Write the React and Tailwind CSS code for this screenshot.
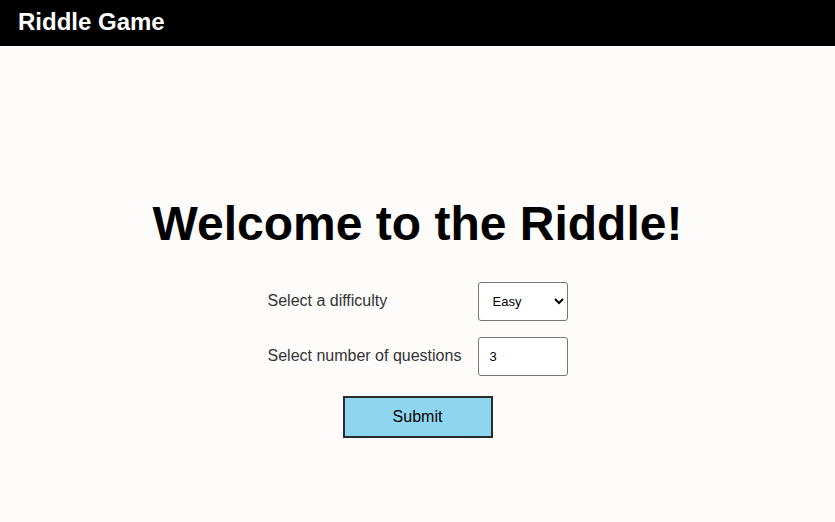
import { useState } from 'react';

export default function App() {
  const [difficulty, setDifficulty] = useState('easy');
  const [count, setCount] = useState(3);

  return (
    <div className="min-h-[522px] bg-[#fdfcfb] font-['Liberation_Sans',Arial,sans-serif]">
      {/* Top bar */}
      <header className="h-[46px] bg-black flex items-center px-[18px]">
        <h2 className="text-white text-[24px] font-bold leading-none -mt-[2px]">Riddle Game</h2>
      </header>

      <main className="flex flex-col items-center pt-[150px]">
        <h1 className="text-[48px] font-bold text-black leading-[55px]">Welcome to the Riddle!</h1>

        <form className="mt-[31px] flex flex-col items-center" onSubmit={e => e.preventDefault()}>
          <div className="grid grid-cols-[210px_90px] gap-y-[16px] items-center text-[16px] text-[#333]">
            <label htmlFor="difficulty" className="-mt-[2px]">Select a difficulty</label>
            <select
              id="difficulty"
              value={difficulty}
              onChange={e => setDifficulty(e.target.value)}
              className="w-[90px] h-[39px] border border-[#767676] rounded-[3px] bg-white pl-[10px] pr-[4px] text-[13px] text-black"
            >
              <option value="easy">Easy</option>
              <option value="medium">Medium</option>
              <option value="hard">Hard</option>
            </select>

            <label htmlFor="count" className="-mt-[2px]">Select number of questions</label>
            <input
              id="count"
              type="number"
              value={count}
              onChange={e => setCount(e.target.value)}
              className="w-[90px] h-[39px] border border-[#767676] rounded-[3px] bg-white px-[11px] text-[13px] text-black"
            />
          </div>

          <button
            type="submit"
            className="mt-[20px] w-[150px] h-[42px] bg-[#8ed6f0] border-2 border-[#2b2b2b] text-[16px] text-black"
          >
            Submit
          </button>
        </form>
      </main>
    </div>
  );
}
